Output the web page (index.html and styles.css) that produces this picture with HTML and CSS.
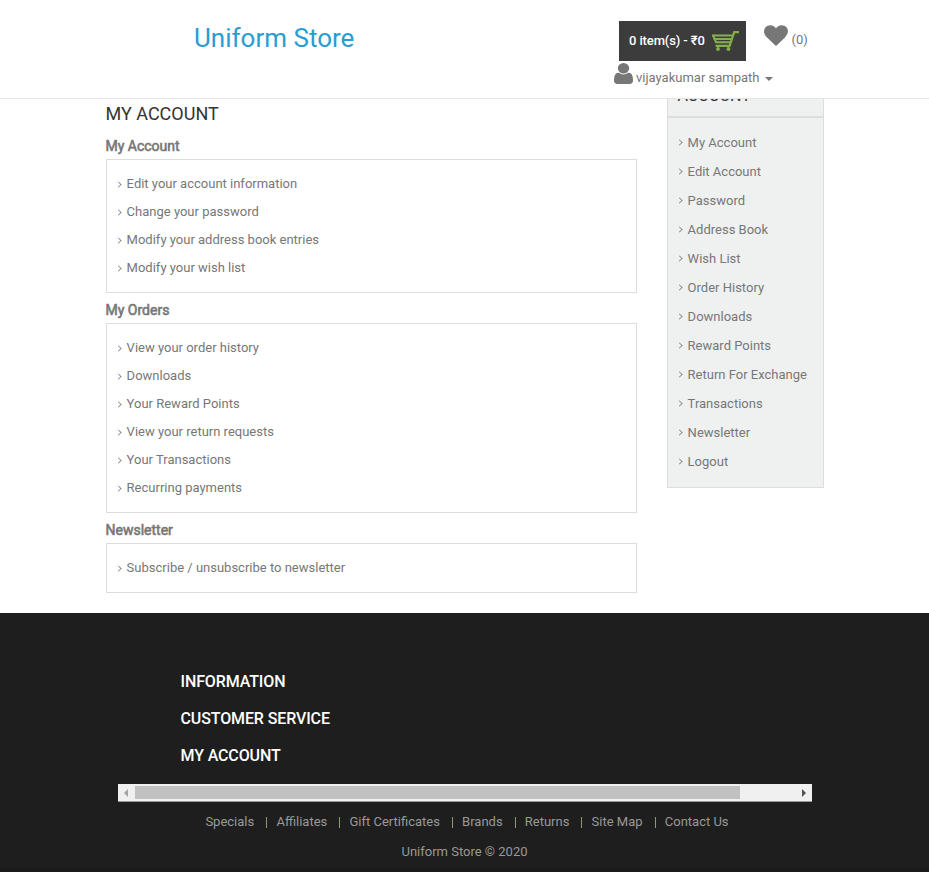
FILE: index.html
```html
<!DOCTYPE html>
<html lang="en">
<head>
<meta charset="utf-8">
<title>My Account</title>
<link rel="stylesheet" href="styles.css">
</head>
<body>
<header class="header">
  <div class="logo">Uniform Store</div>
  <div class="tools">
    <div class="tools-row">
      <div class="cart"><span class="cart-text">0 item(s) - ₹0</span>
        <svg class="cart-icon" viewBox="0 0 27 20" fill="none" stroke="#84b04c"><path d="M27 1.2H22.2L17.6 14.8H3.6" stroke-width="2.2"/><path d="M0 4.5H20.5M1.5 7.9H19M3.3 11.2H18" stroke-width="2"/><path d="M1 4L4.2 11.5" stroke-width="2"/><circle cx="6" cy="18" r="1.9" fill="#84b04c" stroke="none"/><circle cx="16.4" cy="18" r="1.9" fill="#84b04c" stroke="none"/></svg>
      </div>
      <svg class="heart" viewBox="0 128 1792 1536"><path d="M896 1664q-26 0-44-18l-624-602q-10-8-27.5-26t-55.5-65.5-68-97.5-53.5-121-23.5-138q0-220 127-344t351-124q62 0 126.5 21.5t120 58 95.5 68.5 76 68q36-36 76-68t95.5-68.5 120-58 126.5-21.5q224 0 351 124t127 344q0 221-229 450l-623 600q-18 18-44 18z"/></svg>
      <span class="wish">(0)</span>
    </div>
    <div class="user-row">
      <svg class="user" viewBox="256 128 1280 1536" preserveAspectRatio="none"><path d="M1536 1399q0 109-62.5 187t-150.5 78h-854q-88 0-150.5-78t-62.5-187q0-85 8.5-160.5t31.5-152 58.5-131 94-89 134.5-34.5q131 128 313 128t313-128q76 0 134.5 34.5t94 89 58.5 131 31.5 152 8.5 160.5zm-256-887q0 159-112.5 271.5t-271.5 112.5-271.5-112.5-112.5-271.5 112.5-271.5 271.5-112.5 271.5 112.5 112.5 271.5z"/></svg>
      <span class="user-name">vijayakumar sampath</span><span class="caret"></span>
    </div>
  </div>
</header>
<div class="page">
  <main class="content">
    <h1>MY ACCOUNT</h1>
    <h2>My Account</h2>
    <ul class="box">
      <li><a>Edit your account information</a></li>
      <li><a>Change your password</a></li>
      <li><a>Modify your address book entries</a></li>
      <li><a>Modify your wish list</a></li>
    </ul>
    <h2>My Orders</h2>
    <ul class="box">
      <li><a>View your order history</a></li>
      <li><a>Downloads</a></li>
      <li><a>Your Reward Points</a></li>
      <li><a>View your return requests</a></li>
      <li><a>Your Transactions</a></li>
      <li><a>Recurring payments</a></li>
    </ul>
    <h2>Newsletter</h2>
    <ul class="box">
      <li><a>Subscribe / unsubscribe to newsletter</a></li>
    </ul>
  </main>
  <aside class="side">
    <div class="side-title">ACCOUNT</div>
    <ul class="side-list">
      <li><a>My Account</a></li>
      <li><a>Edit Account</a></li>
      <li><a>Password</a></li>
      <li><a>Address Book</a></li>
      <li><a>Wish List</a></li>
      <li><a>Order History</a></li>
      <li><a>Downloads</a></li>
      <li><a>Reward Points</a></li>
      <li><a>Return For Exchange</a></li>
      <li><a>Transactions</a></li>
      <li><a>Newsletter</a></li>
      <li><a>Logout</a></li>
    </ul>
  </aside>
</div>
<footer class="footer">
  <div class="groups">
    <h3>INFORMATION</h3>
    <h3>CUSTOMER SERVICE</h3>
    <h3>MY ACCOUNT</h3>
  </div>
  <div class="scrollbar"><i class="arrow left"></i><i class="thumb"></i><i class="arrow right"></i></div>
  <ul class="links">
    <li>Specials</li><li>Affiliates</li><li>Gift Certificates</li><li>Brands</li><li>Returns</li><li>Site Map</li><li>Contact Us</li>
  </ul>
  <div class="copy">Uniform Store © 2020</div>
</footer>
</body>
</html>
```
FILE: styles.css
```css
* { box-sizing: border-box; }
body { margin: 0; background: #fff; color: #777; font: 13px/20px Roboto, "Noto Sans", sans-serif; }
h1, h2, h3, ul { margin: 0; padding: 0; font-weight: 400; }
li { list-style: none; }
svg { display: block; flex: none; fill: #777; }

.header { position: relative; z-index: 2; display: flex; height: 99px; background: #fff; border-bottom: 1px solid #e5e5e5; }
.logo { width: 420px; padding: 20px 0 0 194px; font-size: 26px; line-height: 36px; color: #2a9dd0; margin-right: 194px; white-space: nowrap; }
.tools { padding-top: 21px; }
.tools-row { display: flex; padding-left: 5px; }
.cart { display: flex; width: 127px; height: 40px; padding-left: 10px; background: #3c3c3c; color: #fff; font-weight: 500; line-height: 40px; letter-spacing: -0.12px; white-space: nowrap; }
.cart-text { width: 83px; }
.cart-icon { width: 27px; height: 20px; margin-top: 10px; fill: none; }
.heart { width: 24px; height: 21px; margin: 4px 3.5px 0 18px; }
.wish { padding-top: 9px; }
.user-row { display: flex; }
.user { width: 19px; height: 21px; margin: 2px 3px 0 0; }
.user-name { padding-top: 7px; }
.caret { margin: 16px 0 0 5px; width: 8px; height: 4px; border: 4px solid transparent; border-top-color: #777; border-bottom: 0; }

.page { display: flex; gap: 30px; height: 514px; padding-left: 106px; }
.content { width: 531px; }
h1 { padding-top: 4px; height: 36px; margin-left: -0.5px; font-size: 18px; line-height: 22px; color: #333; }
h2 { height: 24px; margin-left: -0.5px; font-size: 14px; line-height: 22px; -webkit-text-stroke: 0.6px #777; }
.box { border: 1px solid #ddd; padding: 10px; margin-bottom: 6px; }
.box li { height: 28px; line-height: 28px; }
.box li a, .side-list li a { display: flex; align-items: center; margin-left: -0.9px; white-space: nowrap; }
.box li a::before, .side-list li a::before { content: ""; flex: none; width: 4px; height: 4px; margin: 1px 5.5px 0 0; border: solid #808080; border-width: 1px 1px 0 0; transform: rotate(45deg) scale(0.88); }
.side-list li a::before { margin-top: -1px; }
.side { width: 157px; height: 410px; margin-top: -21px; border: 1px solid #ddd; background: #eff1f1; }
.side-title { height: 39px; padding: 7px 9.5px; border-bottom: 2px solid #ddd; font-size: 16px; line-height: 20px; color: #333; }
.side-list { padding: 10px; }
.side-list li { height: 29px; line-height: 29px; }

.footer { height: 259px; padding-top: 59px; background: #1e1e1e; color: #999; border-bottom: 4px solid #1b1b1b; }
.groups { padding-left: 180.5px; }
h3 { height: 37px; font-size: 16px; line-height: 20px; font-weight: 500; letter-spacing: -0.12px; color: #fff; }
.scrollbar { display: flex; align-items: center; width: 694px; height: 18px; margin: 1px 0 0 118px; background: #f0f0f0; border-bottom: 1px solid #999; }
.thumb { width: 605px; height: 13px; background: #c1c1c1; }
.arrow { width: 4px; height: 8px; border: 4px solid transparent; }
.left { margin: 0 7px 0 6px; border-left: 0; border-right-color: #a3a3a3; }
.right { margin-left: 62px; border-right: 0; border-left-color: #505050; }
.links { display: flex; padding: 10px 0 0 205.4px; }
.links li { line-height: 20px; white-space: nowrap; }
.links li + li { display: flex; align-items: center; }
.links li + li::before { content: ""; width: 1px; height: 11px; margin: 0 9.2px 0 12px; background: #8a9977; }
.copy { padding-top: 10px; text-align: center; }
```
